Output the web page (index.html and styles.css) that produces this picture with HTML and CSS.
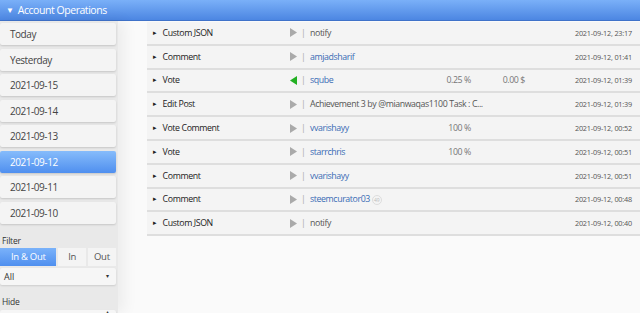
FILE: index.html
```html
<!DOCTYPE html>
<html lang="en">
<head>
    <meta charset="UTF-8">
    <title>Account Operations</title>
    <link rel="stylesheet" href="styles.css">
</head>
<body>
    <div class="panel-header">
        <span class="caret">&#9660;</span> Account Operations
    </div>

    <div class="panel-body">
        <aside class="sidebar">
            <div class="day">Today</div>
            <div class="day">Yesterday</div>
            <div class="day">2021-09-15</div>
            <div class="day">2021-09-14</div>
            <div class="day">2021-09-13</div>
            <div class="day active">2021-09-12</div>
            <div class="day">2021-09-11</div>
            <div class="day">2021-09-10</div>

            <div class="label">Filter</div>
            <div class="segments">
                <span class="seg active">In &amp; Out</span>
                <span class="seg">In</span>
                <span class="seg">Out</span>
            </div>
            <div class="select">All <span class="select-arrow">&#9662;</span></div>

            <div class="label">Hide</div>
            <div class="select"><span class="select-arrow up">&#9652;</span></div>
        </aside>

        <main class="ops">
            <div class="op">
                <span class="op-type"><span class="tri">&#9656;</span>Custom JSON</span>
                <span class="dir"><svg width="7" height="9" viewBox="0 0 7 9"><path d="M0 0L7 4.5L0 9Z" fill="#aaa"/></svg></span>
                <span class="bar">|</span>
                <span class="op-info">notify</span>
                <span class="op-date">2021-09-12, 23:17</span>
            </div>
            <div class="op">
                <span class="op-type"><span class="tri">&#9656;</span>Comment</span>
                <span class="dir"><svg width="7" height="9" viewBox="0 0 7 9"><path d="M0 0L7 4.5L0 9Z" fill="#aaa"/></svg></span>
                <span class="bar">|</span>
                <span class="op-info"><a>amjadsharif</a></span>
                <span class="op-date">2021-09-12, 01:41</span>
            </div>
            <div class="op">
                <span class="op-type"><span class="tri">&#9656;</span>Vote</span>
                <span class="dir"><svg width="7" height="9" viewBox="0 0 7 9"><path d="M7 0L0 4.5L7 9Z" fill="#22b022"/></svg></span>
                <span class="bar">|</span>
                <span class="op-info"><a>sqube</a></span>
                <span class="op-pct">0.25 %</span>
                <span class="op-val">0.00 $</span>
                <span class="op-date">2021-09-12, 01:39</span>
            </div>
            <div class="op">
                <span class="op-type"><span class="tri">&#9656;</span>Edit Post</span>
                <span class="dir"><svg width="7" height="9" viewBox="0 0 7 9"><path d="M0 0L7 4.5L0 9Z" fill="#aaa"/></svg></span>
                <span class="bar">|</span>
                <span class="op-info">Achievement 3 by @mianwaqas1100 Task : C...</span>
                <span class="op-date">2021-09-12, 01:39</span>
            </div>
            <div class="op">
                <span class="op-type"><span class="tri">&#9656;</span>Vote Comment</span>
                <span class="dir"><svg width="7" height="9" viewBox="0 0 7 9"><path d="M0 0L7 4.5L0 9Z" fill="#aaa"/></svg></span>
                <span class="bar">|</span>
                <span class="op-info"><a>vvarishayy</a></span>
                <span class="op-pct">100 %</span>
                <span class="op-val"></span>
                <span class="op-date">2021-09-12, 00:52</span>
            </div>
            <div class="op">
                <span class="op-type"><span class="tri">&#9656;</span>Vote</span>
                <span class="dir"><svg width="7" height="9" viewBox="0 0 7 9"><path d="M0 0L7 4.5L0 9Z" fill="#aaa"/></svg></span>
                <span class="bar">|</span>
                <span class="op-info"><a>starrchris</a></span>
                <span class="op-pct">100 %</span>
                <span class="op-val"></span>
                <span class="op-date">2021-09-12, 00:51</span>
            </div>
            <div class="op">
                <span class="op-type"><span class="tri">&#9656;</span>Comment</span>
                <span class="dir"><svg width="7" height="9" viewBox="0 0 7 9"><path d="M0 0L7 4.5L0 9Z" fill="#aaa"/></svg></span>
                <span class="bar">|</span>
                <span class="op-info"><a>vvarishayy</a></span>
                <span class="op-date">2021-09-12, 00:51</span>
            </div>
            <div class="op">
                <span class="op-type"><span class="tri">&#9656;</span>Comment</span>
                <span class="dir"><svg width="7" height="9" viewBox="0 0 7 9"><path d="M0 0L7 4.5L0 9Z" fill="#aaa"/></svg></span>
                <span class="bar">|</span>
                <span class="op-info"><a>steemcurator03</a> <span class="rep">49</span></span>
                <span class="op-date">2021-09-12, 00:48</span>
            </div>
            <div class="op">
                <span class="op-type"><span class="tri">&#9656;</span>Custom JSON</span>
                <span class="dir"><svg width="7" height="9" viewBox="0 0 7 9"><path d="M0 0L7 4.5L0 9Z" fill="#aaa"/></svg></span>
                <span class="bar">|</span>
                <span class="op-info">notify</span>
                <span class="op-date">2021-09-12, 00:40</span>
            </div>
        </main>
    </div>
</body>
</html>
```

FILE: styles.css
```css
* {
    margin: 0;
    padding: 0;
    box-sizing: border-box;
}

body {
    font-family: 'Open Sans', 'Noto Sans', Arial, sans-serif;
    background: #fafafa;
    color: #333;
    width: 640px;
    height: 313px;
    overflow: hidden;
}

.panel-header {
    height: 21px;
    background: linear-gradient(to bottom, #7ab0f8 0%, #4c86e2 100%);
    border-bottom: 1px solid #3f72c9;
    color: white;
    font-size: 10.5px;
    letter-spacing: -0.45px;
    line-height: 20px;
    padding-left: 6px;
}

.caret {
    font-size: 8px;
    margin-right: 2px;
    position: relative;
    top: -1px;
}

.panel-body {
    display: flex;
    height: 292px;
}

.sidebar {
    width: 118px;
    flex-shrink: 0;
    background: #e9e9e9;
    padding: 2px 2px 0 0;
    box-shadow: 6px 0 14px rgba(0,0,0,0.06);
    position: relative;
    z-index: 1;
}

.day {
    height: 22px;
    margin-bottom: 3.5px;
    background: #f4f4f4;
    border-radius: 2px;
    box-shadow: 0 1px 2px rgba(0,0,0,0.15);
    font-size: 10px;
    letter-spacing: -0.45px;
    line-height: 22px;
    padding-left: 10px;
    color: #444;
}

.day.active {
    background: linear-gradient(to bottom, #86bcfb 0%, #4f8fef 100%);
    color: white;
}

.label {
    font-size: 8.5px;
    letter-spacing: -0.2px;
    line-height: 12px;
    color: #333;
    margin: 11px 0 1.5px 2px;
}

.label + .select {
    margin-top: 1.5px;
}

.segments {
    display: flex;
    height: 18px;
    margin-bottom: 2px;
}

.seg {
    background: #f4f4f4;
    font-size: 9.5px;
    letter-spacing: -0.3px;
    line-height: 18px;
    text-align: center;
    color: #555;
    margin-left: 2px;
    width: 28px;
}

.seg:last-child {
    width: 29px;
}

.seg.active {
    width: 58px;
    margin-left: 0;
    background: linear-gradient(to bottom, #7ab2fa 0%, #4f8fef 100%);
    color: white;
}

.select {
    height: 17px;
    background: #f6f6f6;
    border-radius: 2px;
    box-shadow: 0 1px 2px rgba(0,0,0,0.12);
    font-size: 9px;
    line-height: 17px;
    padding-left: 4px;
    position: relative;
}

.select-arrow {
    position: absolute;
    right: 7px;
    font-size: 6px;
    color: #333;
}

.select-arrow.up {
    top: -6px;
}

.ops {
    flex: 1;
    padding: 1px 0 0 29px;
}

.op {
    display: flex;
    align-items: center;
    height: 23.8px;
    background: #f4f4f4;
    border-bottom: 2px solid #dedede;
    font-size: 8.8px;
    letter-spacing: -0.4px;
}

.op-type {
    width: 143px;
    padding-left: 6px;
    color: #222;
}

.tri {
    font-size: 7px;
    margin-right: 6px;
    position: relative;
    top: -1px;
}

.dir {
    width: 11px;
    display: flex;
}

.bar {
    color: #aaa;
    width: 9px;
}

.op-info {
    flex: 1;
    color: #555;
    white-space: nowrap;
}

.op-info a {
    color: #3a6cb5;
}

.rep {
    display: inline-block;
    width: 10px;
    height: 10px;
    border: 1px solid #ddd;
    border-radius: 50%;
    font-size: 5px;
    letter-spacing: 0;
    line-height: 8px;
    text-align: center;
    color: #bbb;
    vertical-align: middle;
}

.op-pct {
    width: 60px;
    text-align: right;
    color: #777;
}

.op-val {
    width: 54px;
    text-align: right;
    color: #777;
}

.op-date {
    width: 115px;
    text-align: right;
    padding-right: 8px;
    font-size: 7.3px;
    letter-spacing: -0.2px;
    color: #555;
}
```
